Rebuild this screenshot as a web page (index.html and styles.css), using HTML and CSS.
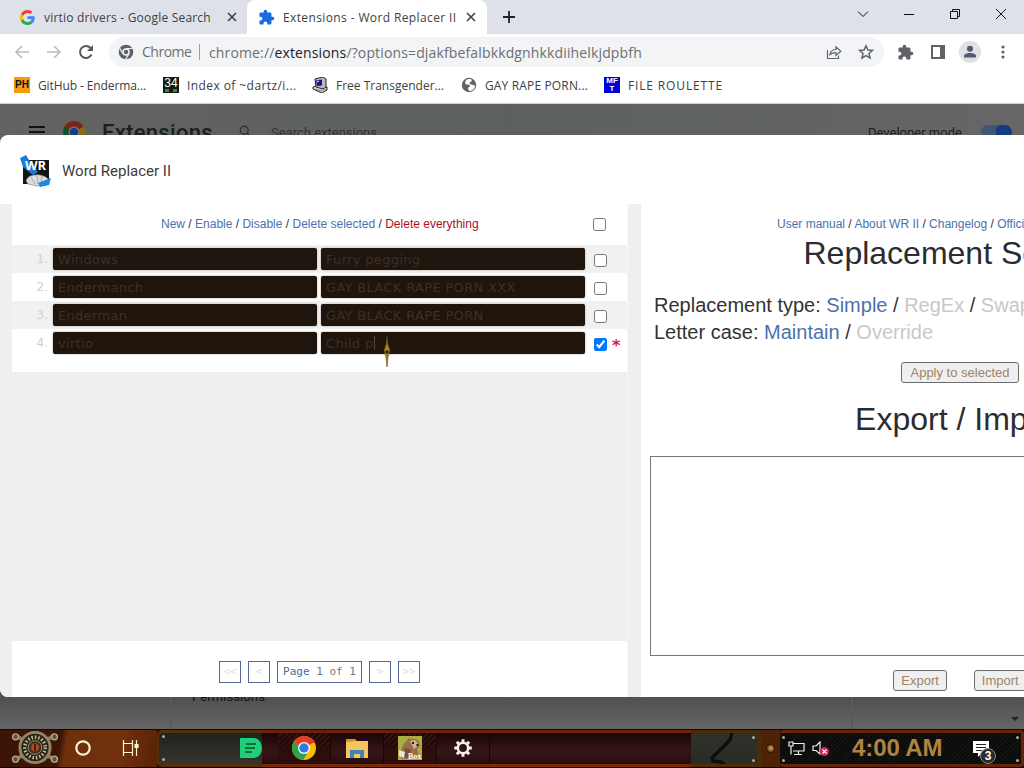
FILE: index.html
```html
<!DOCTYPE html>
<html lang="en">
  <head>
    <meta charset="UTF-8" />
    <meta name="viewport" content="width=device-width, initial-scale=1.0" />
    <title>Extensions - Word Replacer II</title>
    <link rel="stylesheet" href="styles.css">
  </head>
  <body>
    <!-- Tabs -->
    <div class="tabstrip">
      <div class="tab tab-first">
        <svg class="icon15" viewBox="0 0 48 48"><path fill="#ea4335" d="M24 9.500c3.500 0 6.700 1.200 9.200 3.600l6.900-6.900C35.900 2.400 30.500 0 24 0 14.600 0 6.500 5.400 2.600 13.200l8 6.200C12.400 13.700 17.700 9.500 24 9.500z"/><path fill="#4285f4" d="M47 24.500c0-1.600-.2-3.100-.4-4.500H24v9h12.900c-.6 3-2.300 5.500-4.800 7.200l7.700 6C44.400 38 47 31.800 47 24.500z"/><path fill="#fbbc05" d="M10.500 28.600a14.500 14.500 0 0 1 0-9.200l-8-6.200a24 24 0 0 0 0 21.600z"/><path fill="#34a853" d="M24 48c6.500 0 11.900-2.100 15.900-5.800l-7.700-6c-2.200 1.500-4.900 2.300-8.200 2.300-6.300 0-11.600-4.200-13.500-9.900l-8 6.200C6.500 42.600 14.600 48 24 48z"/></svg>
        <span class="tab-title">virtio drivers - Google Search</span>
        <svg class="close" viewBox="0 0 10 10"><path d="M1 1l8 8M9 1l-8 8"/></svg>
      </div>
      <div class="tab tab-active">
        <svg class="icon17" viewBox="0 0 24 24" fill="#1a6be0"><path d="M20.500 11H19V7a2 2 0 0 0-2-2h-4V3.500a2.500 2.500 0 0 0-5 0V5H4a2 2 0 0 0-2 2v3.800h1.500a2.700 2.700 0 0 1 0 5.400H2V20a2 2 0 0 0 2 2h3.800v-1.500a2.700 2.700 0 0 1 5.400 0V22H17a2 2 0 0 0 2-2v-4h1.500a2.500 2.500 0 0 0 0-5z"/></svg>
        <span class="tab-title">Extensions - Word Replacer II</span>
        <svg class="close" viewBox="0 0 10 10"><path d="M1 1l8 8M9 1l-8 8"/></svg>
      </div>
      <svg class="plus" viewBox="0 0 12 12"><path d="M6 0v12M0 6h12"/></svg>
      <div class="window-buttons">
        <svg viewBox="0 0 12 12"><path d="M1 3.500l5 5 5-5"/></svg>
        <svg viewBox="0 0 12 12"><path d="M1 6.500h10"/></svg>
        <svg viewBox="0 0 12 12"><path d="M1.500 3.500h7v7h-7zM3.500 3.500v-2h7v7h-2"/></svg>
        <svg viewBox="0 0 12 12"><path d="M1 1l10 10M11 1L1 11"/></svg>
      </div>
    </div>

    <!-- Toolbar -->
    <div class="toolbar">
      <svg class="nav-icon faded" viewBox="0 0 16 16"><path d="M15 8H2M8 2L2 8l6 6"/></svg>
      <svg class="nav-icon faded" viewBox="0 0 16 16"><path d="M1 8h13M8 2l6 6-6 6"/></svg>
      <svg class="nav-icon" viewBox="0 0 16 16"><path d="M13.500 10.500a6 6 0 1 1-1-6.500l1 1"/><path class="solid" d="M15 1v6H9z"/></svg>
      <div class="omnibox">
        <svg class="chrome-grey" viewBox="0 0 16 16"><circle cx="8" cy="8" r="7.300" fill="#5f6368"/><circle cx="8" cy="8" r="3" fill="#5f6368" stroke="#f1f3f4" stroke-width="1.500"/><path d="M8 4.500h6.500M5 9.800L1.700 4.200M11 9.800l-3.300 5.500" stroke="#f1f3f4" stroke-width="1.200"/></svg>
        <span class="origin">Chrome</span>
        <span class="url">chrome://<b>extensions</b>/?options=djakfbefalbkkdgnhkkdiihelkjdpbfh</span>
        <svg class="share" viewBox="0 0 16 16"><path d="M1.500 6v8.500h11v-3M4 10.500c.5-3.500 3-5 6-5V2.800l4.800 4.400L10 11.500V8.700c-2.500 0-4.500.3-6 1.800z"/></svg>
        <svg class="star" viewBox="0 0 16 16"><path d="M8 1.800l1.900 4.200 4.500.4-3.400 3 1 4.500L8 11.500l-4 2.400 1-4.500-3.400-3L6.100 6z"/></svg>
      </div>
      <svg class="icon17" viewBox="0 0 24 24" fill="#5f6368"><path d="M20.500 11H19V7a2 2 0 0 0-2-2h-4V3.500a2.500 2.500 0 0 0-5 0V5H4a2 2 0 0 0-2 2v3.800h1.500a2.700 2.700 0 0 1 0 5.400H2V20a2 2 0 0 0 2 2h3.800v-1.500a2.700 2.700 0 0 1 5.400 0V22H17a2 2 0 0 0 2-2v-4h1.500a2.500 2.500 0 0 0 0-5z"/></svg>
      <span class="side-panel"></span>
      <svg class="avatar" viewBox="0 0 22 22"><circle cx="11" cy="11" r="11" fill="#dee1e6"/><circle cx="11" cy="7.800" r="3" fill="#4f5b70"/><path d="M5 16.500v-1.500c0-4 12-4 12 0v1.500z" fill="#4f5b70"/></svg>
      <svg class="menu-dots" viewBox="0 0 4 16"><circle cx="2" cy="3" r="1.600"/><circle cx="2" cy="8" r="1.600"/><circle cx="2" cy="13" r="1.600"/></svg>
    </div>

    <!-- Bookmarks -->
    <div class="bookmarks">
      <div class="bookmark bm1"><span class="fav ph">PH</span><span>GitHub - Enderma...</span></div>
      <div class="bookmark bm2"><span class="fav r34">34<i></i></span><span>Index of ~dartz/i...</span></div>
      <div class="bookmark bm3">
        <svg class="icon16" viewBox="0 0 16 16"><path d="M1 10l4-1 10 1v3l-5 3-9-4z" fill="#ddd" stroke="#222"/><path d="M3 2l8-2 3 2v8l-3 2-7-2z" fill="#bbb" stroke="#222"/><path d="M4 3.500l6-1v6l-5 .5z" fill="#14148c"/><path d="M5 5l2-1" stroke="#fff"/><path d="M3 12l7 2 4-2" stroke="#888" fill="none"/></svg>
        <span>Free Transgender...</span>
      </div>
      <div class="bookmark bm4">
        <svg class="icon16" viewBox="0 0 16 16"><circle cx="8" cy="8" r="7.200" fill="#5f6368"/><path d="M9 1.800c-4 0-5.500 3-4.500 5 1 1.500 4 .5 4.500 2 .3 1.300-2 1.200-2 2.700l1 2.500c4 0 6-3 6-5.500l-2-.5c-1-1-3 0-3.500-1.500C8 5 11 5 11 3z" fill="#fff"/></svg>
        <span>GAY RAPE PORN...</span>
      </div>
      <div class="bookmark bm5"><span class="fav mft">MF<br>T</span><span>FILE ROULETTE</span></div>
    </div>

    <!-- Extensions page, dimmed behind the dialog -->
    <div class="page">
      <div class="page-header">
        <span class="burger"></span>
        <svg class="logo" viewBox="0 0 24 24"><circle cx="12" cy="12" r="11" fill="#8a6a15"/><path d="M12 12L2.500 6.500a11 11 0 0 1 19 0z" fill="#7c231b"/><path d="M12 12L2.500 6.500a11 11 0 0 0 8.500 16.400z" fill="#174d27"/><circle cx="12" cy="12" r="5.500" fill="#777"/><circle cx="12" cy="12" r="4.200" fill="#173f80"/></svg>
        <span class="page-title">Extensions</span>
        <svg class="search-icon" viewBox="0 0 16 16"><circle cx="6" cy="6" r="4.500"/><path d="M9.500 9.500L15 15"/></svg>
        <span class="search-text">Search extensions</span>
        <span class="dev-mode">Developer mode</span>
        <span class="toggle"></span>
      </div>
      <div class="page-footer">
        <div class="page-card"><span>Permissions</span></div>
        <span class="scroll-arrow"></span>
      </div>

      <div class="dialog">
        <div class="dialog-header">
          <svg class="wr-logo" viewBox="0 0 32 32"><path d="M3 5h26v24H3z" fill="#141414"/><path d="M0 3l6-3 3 5 9 12-5 3L3 12z" fill="#1c7bd6"/><text x="5" y="15" class="wr-text">WR</text><path d="M6 26c1-4 5-6 9-6 6-1 12 2 14 5l-3 5-9 1-9-2z" fill="#ddd" stroke="#777" stroke-width=".6"/><path d="M11 22l4 7M17 21l1 8M22 21l-1 8" stroke="#888" stroke-width=".6"/><path d="M18 28l13-5-2 7-9 2z" fill="#1c88e5"/></svg>
          <span>Word Replacer II</span>
        </div>
        <div class="dialog-body">
          <div class="list-panel">
            <div class="list-top">
              <div class="actions">
                <a>New</a> / <a>Enable</a> / <a>Disable</a> / <a>Delete selected</a> / <a class="danger">Delete everything</a>
              </div>
              <input type="checkbox">
            </div>
            <div class="row"><span class="num">1.</span><div class="field">Windows</div><div class="field">Furry pegging</div><input type="checkbox"></div>
            <div class="row"><span class="num">2.</span><div class="field">Endermanch</div><div class="field">GAY BLACK RAPE PORN XXX</div><input type="checkbox"></div>
            <div class="row"><span class="num">3.</span><div class="field">Enderman</div><div class="field">GAY BLACK RAPE PORN</div><input type="checkbox"></div>
            <div class="row"><span class="num">4.</span><div class="field">virtio</div><div class="field">Child p<i class="caret"></i></div><input type="checkbox" checked><span class="changed">*</span></div>
            <div class="list-space"></div>
            <div class="pager">
              <span class="pg off">&lt;&lt;</span>
              <span class="pg off">&lt;</span>
              <span class="pg pg-label"><b>Page</b> 1 of 1</span>
              <span class="pg off">&gt;</span>
              <span class="pg off">&gt;&gt;</span>
            </div>
          </div>
          <div class="settings-panel">
            <div class="settings">
              <div class="links"><a>User manual</a> / <a>About WR II</a> / <a>Changelog</a> / <a>Official</a></div>
              <h1>Replacement Settings</h1>
              <div class="options">
                <div>Replacement type: <a>Simple</a> / <span>RegEx</span> / <span>Swap</span></div>
                <div>Letter case: <a>Maintain</a> / <span>Override</span></div>
              </div>
              <div class="apply"><button>Apply to selected</button></div>
              <h1>Export / Import</h1>
              <div class="export-box"></div>
              <div class="io-buttons"><button>Export</button><button>Import</button></div>
            </div>
          </div>
        </div>
      </div>
    </div>

    <!-- Taskbar -->
    <div class="taskbar">
      <div class="start">
        <svg class="gear-orb" viewBox="0 0 50 38">
          <path d="M6 7l38 24M44 7L6 31" stroke="#887a58" stroke-width="4"/>
          <g fill="#5c5036" stroke="#b5a681" stroke-width="1.500"><circle cx="5" cy="8" r="3"/><circle cx="45" cy="8" r="3"/><circle cx="5" cy="31" r="3"/><circle cx="45" cy="31" r="3"/></g>
          <circle cx="25" cy="19" r="15.500" fill="#2a251b" stroke="#8f8567" stroke-width="3"/>
          <circle cx="25" cy="19" r="10.500" fill="none" stroke="#c9bd97" stroke-width="3.500" stroke-dasharray="1.500 2"/>
          <circle cx="25" cy="19" r="7" fill="#3b3222" stroke="#9f9168"/>
          <ellipse cx="25" cy="19" rx="4" ry="4.500" fill="#b04a26"/><path d="M25 15v8" stroke="#2b0d05" stroke-width="1.500"/>
        </svg>
        <svg class="cortana" viewBox="0 0 16 16"><circle cx="8" cy="8" r="6.700"/></svg>
        <svg class="taskview" viewBox="0 0 17 16"><path d="M1.500 0v3.500h9V0M1.500 16v-3.500h9V16M1.500 3.500v9M10.500 3.500v9M14.500 0v4M14.500 8v8"/><path d="M13 4.500h3v3h-3z" fill="#fff0d0"/></svg>
      </div>
      <div class="dock-left">
        <i class="rivets"></i>
        <svg class="note" viewBox="0 0 22 20"><path d="M0 0h14a8 10 0 0 1 0 20H0z" fill="#20cf7a"/><path d="M6 6h10M5 10h10M5 14h7" stroke="#0c4b2b" stroke-width="1.500"/></svg>
      </div>
      <div class="apps">
        <div class="app lit"><svg viewBox="0 0 24 24"><circle cx="12" cy="12" r="12" fill="#fbbc05"/><path d="M12 12L1.600 6a12 12 0 0 1 20.800 0z" fill="#e33b2e"/><path d="M12 12L1.600 6A12 12 0 0 0 11 24l5-8z" fill="#2da14c"/><path d="M12 6h10.400L23 7H12z" fill="#e33b2e"/><circle cx="12" cy="12" r="6" fill="#fff"/><circle cx="12" cy="12" r="4.700" fill="#3579e0"/></svg></div>
        <div class="app"><svg viewBox="0 0 24 24"><path d="M1 3h9l3 3h-12z" fill="#d9901b"/><path d="M1 6l11-1h11v17H1z" fill="#f6c55d"/><path d="M5 22v-8h14v8h-4v-4H9v4z" fill="#3d83bc"/></svg></div>
        <div class="app lit"><svg viewBox="0 0 24 24"><path d="M0 0h24v24H0z" fill="#a9ae42"/><path d="M3 22C2 14 5 7 9 5l1-3 3 1c3-1 7 0 8 3l1 4-3 3 3 10H4z" fill="#9b6e49"/><path d="M12 5l5-1 4 5-5 4z" fill="#d5b290"/><path d="M7 11l6 3-1 7-6 1z" fill="#7a5233"/><path d="M1 14l6 2-1 6-5-2z" fill="#e8e3d5"/><path d="M14 7h2M18.500 9h2" stroke="#241309" stroke-width="2"/><text x="10" y="23" class="box-text">Box</text></svg></div>
        <div class="app"><svg class="settings-icon" viewBox="0 0 24 24"><circle cx="12" cy="12" r="6.200" fill="none" stroke="#f9eeee" stroke-width="3"/><path d="M12 1.500v4M12 18.500v4M1.500 12h4M18.500 12h4M4.600 4.600l2.800 2.800M16.600 16.600l2.800 2.800M19.400 4.600l-2.800 2.800M7.400 16.600l-2.800 2.800" stroke="#f9eeee" stroke-width="3.500"/></svg></div>
      </div>
      <div class="dock-right">
        <svg viewBox="0 0 58 31"><path d="M41 0l-2 7-18 18 1 3 8 1 4 3" fill="none" stroke="#0d0f0c" stroke-width="3.500"/></svg>
        <i class="rivets"></i>
      </div>
      <div class="tray-edge"><i></i></div>
      <div class="tray">
        <i class="rivets"></i>
        <svg class="net" viewBox="0 0 17 15"><path d="M5 2.500h11v7.500H5M10.500 10v3.500M6 13.500h8M1 1h4v4H1zM3 5v8.500"/></svg>
        <svg class="vol" viewBox="0 0 18 16"><path d="M1 5h3l4-4v12L4 9.500H1z" fill="none" stroke="#eee" stroke-width="1.200"/><circle cx="12.500" cy="10.500" r="4.500" fill="#d42350"/><path d="M10.500 8.500l4 4M14.500 8.500l-4 4" stroke="#fff" stroke-width="1.300"/></svg>
        <span class="clock">4:00 AM</span>
        <div class="notify">
          <svg viewBox="0 0 16 16"><path d="M0 0h16v12H9l-4 4v-4H0z" fill="#fff"/><path d="M3 3.500h10M3 6.500h10M3 9.500h6" stroke="#222"/></svg>
          <span class="badge">3</span>
        </div>
        <i class="rivets"></i>
      </div>
    </div>

    <!-- Pointer -->
    <svg class="pointer" viewBox="0 0 8 32"><path d="M4 0l1 9 2 5-1 4-1 3-1 10-1-10-1-3-1-4 2-5z" fill="#a98426" stroke="#5e4511" stroke-width=".6"/><circle cx="4" cy="16" r="1.800" fill="#33250b"/></svg>
  </body>
</html>
```

FILE: styles.css
```css
* {
  box-sizing: border-box;
}
body {
  margin: 0;
  width: 1024px;
  height: 768px;
  overflow: hidden;
  display: flex;
  flex-direction: column;
  font-family: "Liberation Sans", Arial, sans-serif;
  background: #fff;
}
svg {
  display: block;
  flex: none;
}
.icon15 {
  width: 15px;
  height: 15px;
  margin-right: 1px;
}
.icon16 {
  width: 16px;
  height: 16px;
}
.icon17 {
  width: 17px;
  height: 17px;
}

/* tabs */
.tabstrip {
  height: 34px;
  flex: none;
  display: flex;
  align-items: center;
  background: #dee1e8;
  font-family: "Open Sans", "Noto Sans", sans-serif;
  font-size: 12px;
  color: #3c4043;
}
.tab {
  display: flex;
  align-items: center;
  height: 34px;
}
.tab-first {
  width: 247px;
  padding-left: 20px;
}
.tab-active {
  width: 240px;
  padding-left: 11px;
  background: #fff;
  border-radius: 8px 8px 0 0;
}
.tab-title {
  width: 183px;
  margin-left: 8px;
  white-space: nowrap;
  letter-spacing: 0.2px;
}
.tab-active .tab-title {
  letter-spacing: 0.38px;
}
.close {
  width: 10px;
  height: 10px;
  stroke: #3c4043;
  stroke-width: 1.6;
}
.plus {
  width: 12px;
  height: 12px;
  margin-left: 16px;
  stroke: #222;
  stroke-width: 1.8;
}
.window-buttons {
  display: flex;
  gap: 34px;
  margin-left: auto;
  padding: 0 17px 6px 0;
}
.window-buttons svg {
  width: 12px;
  height: 12px;
  fill: none;
  stroke: #111;
}

/* toolbar */
.toolbar {
  height: 36px;
  flex: none;
  display: flex;
  align-items: center;
  padding-left: 14px;
}
.nav-icon {
  width: 16px;
  height: 16px;
  margin-right: 16px;
  fill: none;
  stroke: #55585c;
  stroke-width: 2;
}
.nav-icon.faded {
  stroke: #babcbe;
  stroke-width: 1.6;
}
.nav-icon .solid {
  fill: #55585c;
  stroke: none;
}
.omnibox {
  display: flex;
  align-items: center;
  width: 775px;
  height: 30px;
  padding: 0 9px;
  margin: 0 13px 0 -1px;
  border-radius: 15px;
  background: #f3f4f6;
  font-family: "Open Sans", "Noto Sans", sans-serif;
  font-size: 14px;
  color: #6b6f73;
}
.chrome-grey {
  width: 16px;
  height: 16px;
  fill: none;
}
.origin {
  width: 58px;
  margin-left: 8px;
  border-right: 1px solid #9a9da0;
  line-height: 16px;
  letter-spacing: -0.5px;
}
.url {
  width: 626px;
  padding-left: 9px;
  letter-spacing: 0.14px;
}
.url b {
  font-weight: normal;
  color: #202124;
}
.share,
.star {
  width: 16px;
  height: 16px;
  fill: none;
  stroke: #5f6368;
  stroke-width: 1.2;
}
.star {
  margin-left: 16px;
  stroke-width: 1.5;
}
.side-panel {
  width: 14px;
  height: 14px;
  margin-left: 17px;
  border: 2px solid #5f6368;
  border-right-width: 5px;
}
.avatar {
  width: 22px;
  height: 22px;
  margin-left: 14px;
}
.menu-dots {
  width: 4px;
  height: 16px;
  margin-left: 20px;
  fill: #5f6368;
}

/* bookmarks */
.bookmarks {
  height: 34px;
  flex: none;
  display: flex;
  align-items: center;
  padding: 0 0 3px 14px;
  border-bottom: 1px solid #d0d0d0;
  font-family: "Open Sans", "Noto Sans", sans-serif;
  font-size: 12px;
  color: #3c4043;
}
.bookmark {
  display: flex;
  align-items: center;
  gap: 8px;
  width: 149px;
  white-space: nowrap;
}
.bm1 {
  letter-spacing: -0.1px;
}
.bm2 {
  letter-spacing: 0.42px;
}
.bm4 {
  width: 143px;
  letter-spacing: 0.15px;
}
.bm5 {
  width: 130px;
  letter-spacing: 0.85px;
}
.fav {
  width: 16px;
  height: 16px;
  text-align: center;
  font-family: "Liberation Sans", sans-serif;
  font-weight: bold;
  letter-spacing: 0;
}
.ph {
  background: #f99b0f;
  color: #111;
  font-size: 10px;
  line-height: 16px;
}
.r34 {
  padding-top: 1px;
  background: #101d10;
  color: #fff;
  font-size: 12px;
  font-weight: normal;
  line-height: 10px;
}
.r34 i {
  display: block;
  margin: 1px 2px 0;
  border-bottom: 3px dotted #4a7c45;
}
.mft {
  background: #0000d8;
  color: #fff;
  font-size: 8px;
  line-height: 8px;
}

/* page behind the dialog */
.page {
  position: relative;
  height: 625px;
  flex: none;
  overflow: hidden;
  display: flex;
  flex-direction: column;
  justify-content: space-between;
  background: #646464;
}
.page-header {
  display: flex;
  align-items: center;
  height: 56px;
  padding-left: 29px;
  background: linear-gradient(90deg, #636363, #5c6160 50%, #666);
  font-family: Roboto, sans-serif;
  color: #1d1d1d;
}
.burger {
  width: 16px;
  height: 12px;
  border-top: 2px solid #111;
  border-bottom: 2px solid #111;
  background: linear-gradient(#111, #111) 0 3px / 16px 2px no-repeat;
}
.logo {
  width: 24px;
  height: 24px;
  margin-left: 17px;
}
.page-title {
  width: 137px;
  margin-left: 16px;
  font-size: 22px;
  font-weight: 500;
  letter-spacing: 0.3px;
}
.search-icon {
  width: 14px;
  height: 14px;
  fill: none;
  stroke: #303030;
  stroke-width: 1.6;
}
.search-text {
  width: 597px;
  margin-left: 18px;
  font-size: 13px;
  color: #333;
}
.dev-mode {
  width: 113px;
  font-size: 13px;
  white-space: nowrap;
}
.toggle {
  width: 31px;
  height: 14px;
  border-radius: 7px;
  background: radial-gradient(circle at 23px 7px, #143c82 8px, #405674 8.500px);
}
.page-footer {
  display: flex;
  justify-content: space-between;
  height: 50px;
  background: linear-gradient(#4e4e4e 30%, #656565);
}
.page-card {
  width: 683px;
  margin-left: 170px;
  padding: 10px 0 0 20px;
  border: solid #5a5a5a;
  border-width: 0 2px;
  font: 13px Roboto, sans-serif;
  letter-spacing: 0.1px;
  color: #111;
}
.scroll-arrow {
  align-self: flex-end;
  margin: 0 5px 8px 0;
  border: 4px solid transparent;
  border-top-color: #222;
  border-bottom: 0;
}

/* dialog */
.dialog {
  position: absolute;
  top: 31px;
  left: 0;
  width: 1024px;
  height: 562px;
  overflow: hidden;
  border-radius: 8px 0 0 8px;
  background: #fff;
}
.dialog-header {
  display: flex;
  align-items: center;
  height: 69px;
  padding: 3px 0 0 20px;
  font: 15px Roboto, sans-serif;
  color: #3c3c3c;
}
.wr-logo {
  width: 32px;
  height: 32px;
  margin-right: 10px;
}
.wr-text {
  font: bold 13px "Open Sans", sans-serif;
  fill: #fff;
}
.dialog-body {
  display: flex;
  height: 493px;
  background: #efefef;
}
a {
  color: #4a72ae;
}
a.danger {
  color: #a8101c;
}
.list-panel {
  display: flex;
  flex-direction: column;
  width: 616px;
  margin-left: 12px;
  border-right: 1px solid #f8f8f8;
}
.list-top {
  display: flex;
  align-items: center;
  height: 41px;
  background: #fff;
  font-size: 12px;
  color: #333;
}
.actions {
  width: 581px;
  flex: none;
  padding: 0 0 2px 149px;
  white-space: nowrap;
}
input[type="checkbox"] {
  width: 13px;
  height: 13px;
  margin: 0;
}
.row {
  display: flex;
  align-items: center;
  height: 28px;
  background: #fff;
}
.row:nth-child(even) {
  background: #f1f1f1;
}
.num {
  width: 36px;
  margin-right: 5px;
  text-align: right;
  font: 12px "DejaVu Sans", sans-serif;
  color: #d0d0d0;
}
.field {
  display: flex;
  align-items: center;
  width: 264px;
  height: 22px;
  padding-left: 5px;
  margin-right: 5px;
  border-radius: 2px;
  background: #20150c;
  box-shadow: 0 0 2px #a09890;
  font: 13px "DejaVu Sans", sans-serif;
  letter-spacing: 0.33px;
  color: #3b3027;
}
.field + .field {
  margin-left: -1px;
}
.row input {
  margin: 3px 0 0 4px;
}
.caret {
  width: 1px;
  height: 14px;
  background: #54493f;
}
.changed {
  margin: 6px 0 0 5px;
  font: bold 16px/16px "DejaVu Sans", sans-serif;
  color: #e0164e;
}
.list-space {
  flex: 1;
  border-top: 15px solid #fff;
}
.pager {
  display: flex;
  justify-content: center;
  gap: 7px;
  height: 56px;
  padding-top: 20px;
  background: #fff;
}
.pg {
  height: 22px;
  width: 22px;
  border: 1px solid #556a91;
  text-align: center;
  font: 11px/20px "DejaVu Sans Mono", monospace;
  color: #72777e;
}
.pg b {
  font-weight: normal;
  color: #4669a0;
}
.pg-label {
  width: 85px;
}
.off {
  color: #dcdcdc;
}

/* settings side */
.settings-panel {
  width: 383px;
  margin-left: 13px;
  overflow: hidden;
  background: #fff;
}
.settings {
  width: 638px;
  padding: 13px 9px 0;
  color: #333;
}
.links {
  padding-left: 127px;
  font-size: 12px;
  line-height: 15px;
}
h1 {
  margin: 0;
  font-size: 32px;
  line-height: 42px;
  font-weight: normal;
  text-align: center;
  color: #2c2c30;
}
.options {
  padding: 18px 0 0 4px;
  font-size: 20px;
  line-height: 27px;
}
.options span {
  color: #c8c8c8;
}
.apply {
  display: flex;
  justify-content: center;
  padding: 16px 0 15px;
}
button {
  height: 21px;
  padding: 0 7px;
  border: 1px solid #6b6b6b;
  border-radius: 3px;
  background: #efefef;
  font: 13px "Liberation Sans", Arial, sans-serif;
  color: #9b8566;
}
.apply button {
  width: 118px;
}
.export-box {
  height: 200px;
  margin-top: 16px;
  border: 1px solid #767676;
}
.io-buttons {
  display: flex;
  justify-content: center;
  gap: 27px;
  padding-top: 14px;
}

/* taskbar */
.taskbar {
  display: flex;
  height: 39px;
  flex: none;
  border-top: 1px solid #1b0500;
  border-bottom: 1px solid #120200;
  background: #240b08;
}
.start {
  display: flex;
  align-items: center;
  width: 157px;
  padding: 0 0 2px 10px;
  background: linear-gradient(100deg, #3c1507 0 38%, #6e2f0b 42%, #70310d 75%, #5a2208);
}
.gear-orb {
  width: 50px;
  height: 37px;
}
.cortana {
  width: 16px;
  height: 16px;
  margin-left: 15px;
  fill: none;
  stroke: #ffeed8;
  stroke-width: 2.2;
}
.taskview {
  width: 17px;
  height: 16px;
  margin-left: 31px;
  fill: none;
  stroke: #fff0d0;
  stroke-width: 1.2;
}
.dock-left {
  display: flex;
  align-items: center;
  justify-content: space-between;
  width: 105px;
  padding: 0 0 1px 3px;
  border: solid #553006;
  border-width: 3px 0 3px 2px;
  border-radius: 5px 0 0 5px;
  background: linear-gradient(#20221f, #35352c);
}
.note {
  width: 22px;
  height: 20px;
}
.apps {
  display: flex;
  width: 429px;
  padding-left: 16px;
  border-top: 3px solid #682407;
  border-bottom: 3px solid #792905;
  background: linear-gradient(#1a0505, #361516 60%, #260c0c);
}
.app {
  display: flex;
  align-items: center;
  justify-content: center;
  width: 53px;
  padding-bottom: 1px;
  border-right: 1px solid #1a0505;
}
.app.lit {
  background: linear-gradient(transparent 30%, #2c0f0c 60%), repeating-linear-gradient(135deg, #1e0908 0 2px, #35120d 2px 4px);
}
.app svg {
  width: 24px;
  height: 24px;
}
.app .settings-icon {
  width: 20px;
  height: 20px;
}
.box-text {
  font: bold 8px "Liberation Serif", serif;
  fill: #fff;
}
.dock-right {
  display: flex;
  align-items: center;
  justify-content: space-between;
  width: 70px;
  padding-right: 2px;
  border: solid #4c2b06;
  border-width: 3px 4px 3px 0;
  background: linear-gradient(#30302a, #292d26);
}
.dock-right svg {
  width: 58px;
  height: 31px;
}
.rivets {
  display: flex;
  flex-direction: column;
  justify-content: space-between;
  flex: none;
  width: 3px;
  height: 26px;
}
.rivets::before,
.rivets::after {
  content: "";
  height: 3px;
  border-radius: 50%;
  background: #bfa68a;
}
.tray-edge {
  display: flex;
  align-items: center;
  justify-content: center;
  width: 19px;
  background: #4e2207;
}
.tray-edge i {
  width: 9px;
  height: 9px;
  border: 1px solid #24150a;
  border-radius: 50%;
  background: radial-gradient(circle at 4px 3px, #d0a060, #6b4a20 70%);
}
.tray {
  display: flex;
  align-items: center;
  flex: 1;
  padding: 0 2px;
  border: solid #642407;
  border-width: 3px 3px 3px 0;
  border-radius: 4px;
  background: repeating-linear-gradient(135deg, #0b0b0b 0 2px, #151515 2px 3px);
}
.net {
  width: 17px;
  height: 15px;
  margin-left: 3px;
  fill: none;
  stroke: #eee;
  stroke-width: 1.2;
}
.vol {
  width: 18px;
  height: 16px;
  margin-left: 7px;
}
.clock {
  width: 121px;
  margin: 0 0 2px 22px;
  font: bold 24px "Liberation Sans", Arial, sans-serif;
  letter-spacing: -0.1px;
  color: #b28340;
}
.notify {
  position: relative;
  flex: 1;
  height: 16px;
}
.notify svg {
  width: 16px;
  height: 16px;
}
.badge {
  position: absolute;
  left: 7px;
  top: 7px;
  width: 16px;
  height: 16px;
  border: 1px solid #888;
  border-radius: 50%;
  background: #2a2a2a;
  color: #fff;
  font: bold 12px/14px "Liberation Sans", sans-serif;
  text-align: center;
}

.pointer {
  position: absolute;
  left: 383px;
  top: 336px;
  width: 8px;
  height: 32px;
}
```
